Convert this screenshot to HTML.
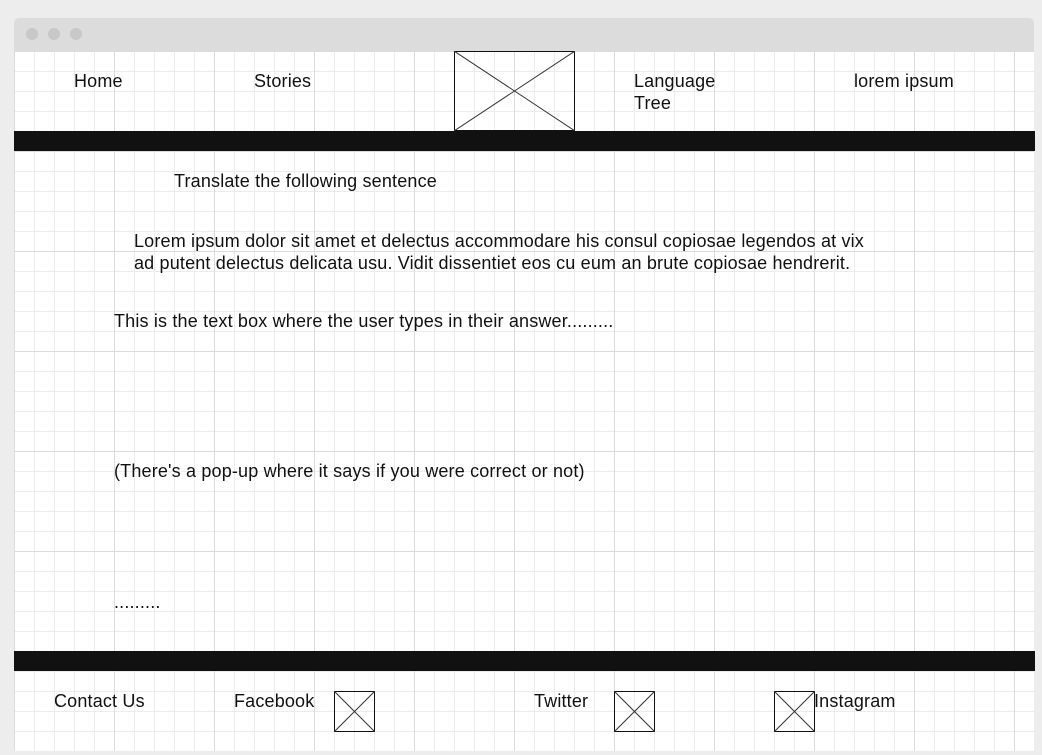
<!DOCTYPE html>
<html><head><meta charset="utf-8"><style>
html,body{margin:0;padding:0;background:#ededed;width:1042px;height:755px;overflow:hidden;}
.win{position:absolute;left:14px;top:18px;width:1020px;height:733px;background:#fff;border-radius:5px 5px 0 0;overflow:hidden;}
.bar{position:absolute;left:0;top:0;width:1020px;height:33px;background:#dcdcdc;}
.dot{position:absolute;top:10px;width:12px;height:12px;border-radius:50%;background:#c8c8c8;}
.grid{position:absolute;left:0;top:33px;width:1020px;height:700px;
background-image:
linear-gradient(to right,#dcdcdc 1px,transparent 1px),
linear-gradient(to bottom,#dcdcdc 1px,transparent 1px),
linear-gradient(to right,#ececec 1px,transparent 1px),
linear-gradient(to bottom,#ececec 1px,transparent 1px);
background-size:100px 100px,100px 100px,20px 20px,20px 20px;
background-position:0 0,0 0,0 0,0 0;}
.blk{position:absolute;left:0;width:1021px;height:20px;background:#111;}
.t{position:absolute;font-family:"Liberation Sans",sans-serif;font-size:18px;letter-spacing:0.17px;line-height:22px;color:#111;white-space:nowrap;}
.x{position:absolute;}
</style></head><body>
<div class="win">
<div class="bar"></div>
<div class="dot" style="left:12px"></div>
<div class="dot" style="left:34px"></div>
<div class="dot" style="left:56px"></div>
<div class="grid"></div>
</div>
<div class="blk" style="left:14px;top:131px"></div>
<div class="blk" style="left:14px;top:651px"></div>

<svg class="x" style="left:454px;top:51px" width="121" height="80"><rect x="0.5" y="0.5" width="120" height="79" fill="none" stroke="#111"/><line x1="0" y1="0" x2="121" y2="80" stroke="#333"/><line x1="121" y1="0" x2="0" y2="80" stroke="#333"/></svg>
<svg class="x" style="left:334px;top:691px" width="41" height="41"><rect x="0.5" y="0.5" width="40" height="40" fill="none" stroke="#111"/><line x1="0" y1="0" x2="41" y2="41" stroke="#333"/><line x1="41" y1="0" x2="0" y2="41" stroke="#333"/></svg>
<svg class="x" style="left:614px;top:691px" width="41" height="41"><rect x="0.5" y="0.5" width="40" height="40" fill="none" stroke="#111"/><line x1="0" y1="0" x2="41" y2="41" stroke="#333"/><line x1="41" y1="0" x2="0" y2="41" stroke="#333"/></svg>
<svg class="x" style="left:774px;top:691px" width="41" height="41"><rect x="0.5" y="0.5" width="40" height="40" fill="none" stroke="#111"/><line x1="0" y1="0" x2="41" y2="41" stroke="#333"/><line x1="41" y1="0" x2="0" y2="41" stroke="#333"/></svg>

<div class="t" style="left:74px;top:70px">Home</div>
<div class="t" style="left:254px;top:70px">Stories</div>
<div class="t" style="left:634px;top:70px">Language<br>Tree</div>
<div class="t" style="left:854px;top:70px">lorem ipsum</div>
<div class="t" style="left:174px;top:170px">Translate the following sentence</div>
<div class="t" style="left:134px;top:230px">Lorem ipsum dolor sit amet et delectus accommodare his consul copiosae legendos at vix<br>ad putent delectus delicata usu. Vidit dissentiet eos cu eum an brute copiosae hendrerit.</div>
<div class="t" style="left:114px;top:310px">This is the text box where the user types in their answer.........</div>
<div class="t" style="left:114px;top:460px">(There's a pop-up where it says if you were correct or not)</div>
<div class="t" style="left:114px;top:591px">.........</div>
<div class="t" style="left:54px;top:690px">Contact Us</div>
<div class="t" style="left:234px;top:690px">Facebook</div>
<div class="t" style="left:534px;top:690px">Twitter</div>
<div class="t" style="left:814px;top:690px">Instagram</div>
</body></html>
